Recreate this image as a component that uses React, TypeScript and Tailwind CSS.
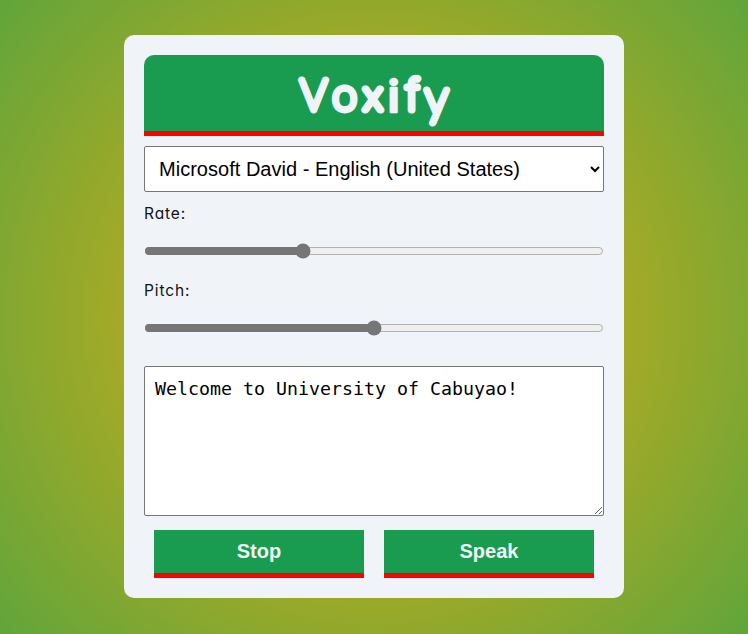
import { useState } from "react";

function Wordmark() {
  return (
    <h1 className="flex h-[81px] items-start justify-center rounded-t-[10px] border-b-[5px] border-[#ff0000] bg-[#1a9c50]">
      <svg width="160" height="76" viewBox="0 0 160 76" role="img" aria-label="Voxify">
        <text
          y="54.5"
          className="fill-[#f0f4f9] stroke-[#f0f4f9] font-['Inter',sans-serif] text-[37px] font-thin"
          strokeWidth="6.8"
          strokeLinejoin="round"
          strokeLinecap="round"
        >
          <tspan x="6.5" className="font-['Lato',sans-serif] text-[41px]">V</tspan>
          <tspan x="38.5" y="54.7" className="font-['Lato',sans-serif] text-[44px]">o</tspan>
          <tspan x="69.5">x</tspan>
          <tspan x="94" y="56.5" className="text-[43px] font-semibold" strokeWidth="2.6">i</tspan>
          <tspan x="112.5" y="54.5" className="text-[41px]">f</tspan>
          <tspan x="131" y="59.3" className="font-['Lato',sans-serif] text-[47px]">y</tspan>
        </text>
      </svg>
    </h1>
  );
}

function Slider({ label, initial }: { label: string; initial: number }) {
  const [value, setValue] = useState(initial);
  return (
    <label className="flex h-[77px] flex-col">
      <span className="h-[24px] font-['Inter',sans-serif] text-[15.5px] leading-[23px] font-normal tracking-[0.9px] text-[#111] [font-feature-settings:'cv11']">
        {label}
      </span>
      <input
        type="range"
        min={0}
        max={100}
        step={0.1}
        value={value}
        onChange={(e) => setValue(Number(e.target.value))}
        className="mt-[17px] h-[16px] w-full accent-[#767676]"
      />
    </label>
  );
}

function ActionButton({ label }: { label: string }) {
  return (
    <button className="h-[48px] flex-1 border-b-[5px] border-[#ff0000] bg-[#1a9c50] text-[20px] leading-[43px] font-bold text-[#f0f4f9]">
      {label}
    </button>
  );
}

export default function App() {
  const [text, setText] = useState("Welcome to University of Cabuyao!");
  return (
    <main className="flex h-[634px] w-full justify-center bg-[radial-gradient(circle,#eaaf11,#61a53b)] pt-[35px] font-['Liberation_Sans',Arial,sans-serif]">
      <section className="flex h-[563px] w-[500px] flex-col rounded-[10px] bg-[#f0f4f9] p-5">
        <Wordmark />
        <select className="mt-[10px] h-[46px] w-full shrink-0 rounded-[2px] border border-[#767676] bg-white pl-[10px] text-[20px] tracking-[0.02px] text-black">
          <option>Microsoft David - English (United States)</option>
        </select>
        <div className="mt-[10px] flex flex-col">
          <Slider label="Rate:" initial={34} />
          <Slider label="Pitch:" initial={50} />
        </div>
        <textarea
          value={text}
          onChange={(e) => setText(e.target.value)}
          spellCheck={false}
          className="mt-[10px] h-[150px] w-full shrink-0 rounded-[2px] border border-[#767676] bg-white p-[10px] font-['DejaVu_Sans_Mono',monospace] text-[18.27px] leading-[23px] text-black"
        />
        <div className="mt-[14px] flex gap-5 px-[10px]">
          <ActionButton label="Stop" />
          <ActionButton label="Speak" />
        </div>
      </section>
    </main>
  );
}
